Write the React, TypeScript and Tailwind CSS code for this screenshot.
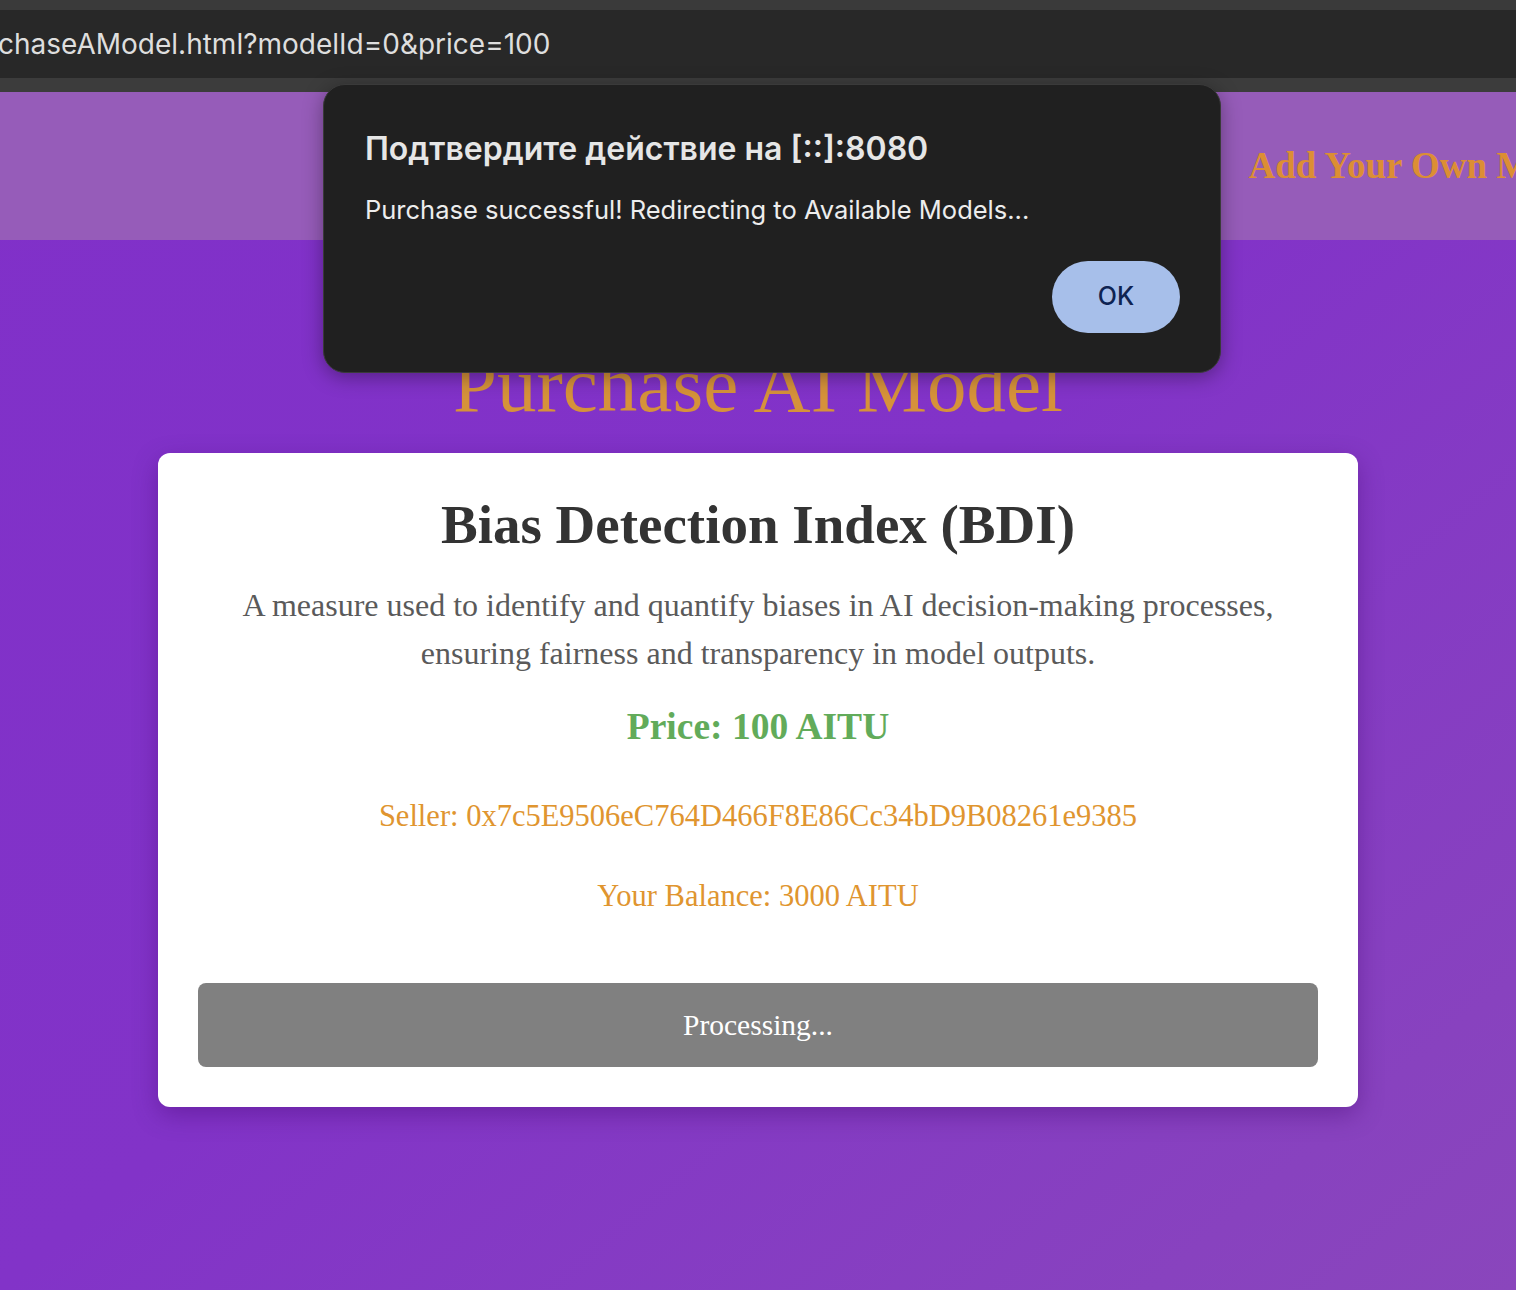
import React from "react";

export default function App() {
  const serif = { fontFamily: '"Liberation Serif", "DejaVu Serif", serif' };
  const sans = { fontFamily: 'Inter, "Noto Sans", Roboto, sans-serif' };
  return (
    <div className="relative w-[1516px] h-[1290px] overflow-hidden bg-gradient-to-br from-[#8030c9] via-[#8233c8] to-[#8a46bc]">
      {/* browser chrome */}
      <div className="h-[10px] bg-[#3a3a3a]" />
      <div className="h-[68px] bg-[#282828] flex items-center overflow-hidden">
        <span className="text-[28px] text-[#dedede] whitespace-nowrap -ml-[2px]" style={sans}>
          chaseAModel.html?modelId=0&amp;price=100
        </span>
      </div>
      <div className="h-[14px] bg-[#3c3c3c]" />

      {/* header */}
      <header className="h-[148px] bg-[#965cb9] flex items-center justify-end overflow-hidden" style={serif}>
        <nav className="flex gap-10 whitespace-nowrap -mr-[81px]">
          <span className="text-[37px] font-bold text-[#dc8e34]">Add Your Own Model</span>
        </nav>
      </header>

      {/* main */}
      <main className="flex flex-col items-center pt-[100px]" style={serif}>
        <h1 className="text-[79px] leading-[90px] text-[#d6923a] mb-[23px] whitespace-nowrap">Purchase AI Model</h1>
        <div className="w-[1200px] bg-white rounded-[12px] shadow-[0_8px_24px_rgba(60,0,100,0.35)] px-[40px] pt-[40px] pb-[40px] flex flex-col items-center">
          <h2 className="text-[55px] leading-[64px] font-bold text-[#333333] whitespace-nowrap">Bias Detection Index (BDI)</h2>
          <p className="mt-[24px] text-[32px] leading-[48px] text-[#5a5a5a] text-center">
            A measure used to identify and quantify biases in AI decision-making processes, ensuring fairness and transparency in model outputs.
          </p>
          <p className="mt-[28px] text-[37.5px] leading-[44px] font-bold text-[#62ab5a]">Price: 100 AITU</p>
          <p className="mt-[49px] text-[30.5px] leading-[36px] text-[#e0952f] whitespace-nowrap">Seller: 0x7c5E9506eC764D466F8E86Cc34bD9B08261e9385</p>
          <p className="mt-[44px] text-[30.5px] leading-[36px] text-[#e0952f]">Your Balance: 3000 AITU</p>
          <button className="mt-[69px] w-full h-[84px] rounded-[8px] bg-[#808080] text-white text-[29.5px]" style={serif}>
            Processing...
          </button>
        </div>
      </main>

      {/* alert dialog */}
      <div
        className="absolute left-[323px] top-[84px] w-[898px] h-[289px] rounded-[22px] bg-[#202020] border border-[#3a3a3a] shadow-[0_4px_20px_rgba(0,0,0,0.35)] px-[41px] pt-[44px]"
        style={sans}
      >
        <div className="text-[32px] font-semibold leading-[40px] text-[#e6e6e6] whitespace-nowrap">Подтвердите действие на [::]:8080</div>
        <div className="mt-[26px] text-[25.5px] leading-[30px] text-[#ededed] whitespace-nowrap">Purchase successful! Redirecting to Available Models...</div>
        <div className="flex justify-end mt-[36px]">
          <button className="w-[128px] h-[72px] rounded-full bg-[#a7bfea] text-[#0e2352] text-[25px] font-medium -mr-[1px]">OK</button>
        </div>
      </div>
    </div>
  );
}
